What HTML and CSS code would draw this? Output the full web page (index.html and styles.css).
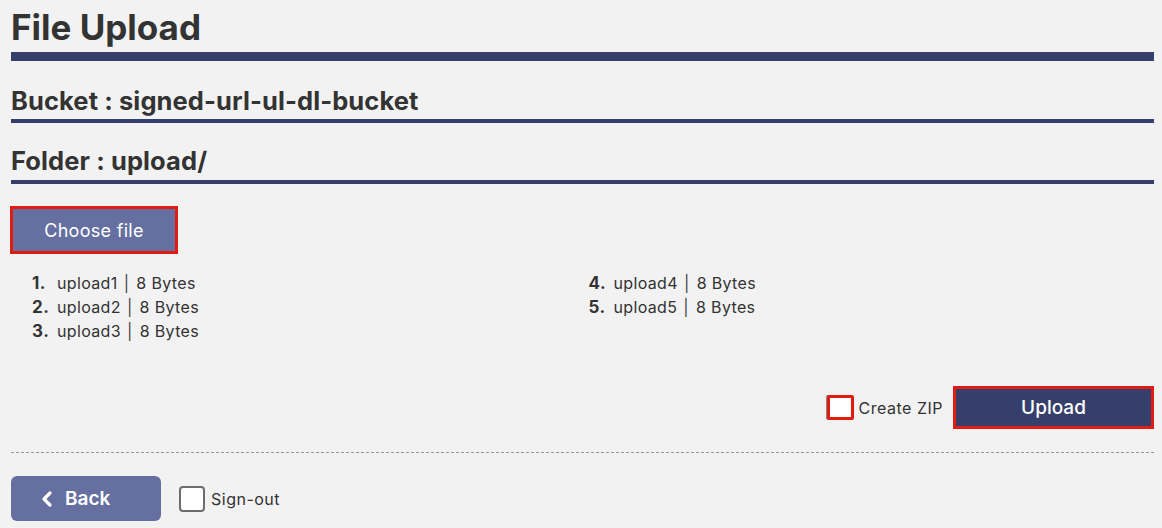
FILE: index.html
```html
<!DOCTYPE html>
<html lang="en">
<head>
<meta charset="utf-8">
<title>File Upload</title>
<link rel="stylesheet" href="styles.css">
</head>
<body>
<div class="page">
  <h1 class="title">File Upload</h1>
  <h2 class="sub sub-bucket">Bucket : signed-url-ul-dl-bucket</h2>
  <h2 class="sub sub-folder">Folder : upload/</h2>

  <div class="choose-wrap">
    <button class="btn-choose" type="button">Choose file</button>
  </div>

  <ol class="files">
    <li>upload1<span class="pipe">|</span>8 Bytes</li>
    <li>upload2<span class="pipe">|</span>8 Bytes</li>
    <li>upload3<span class="pipe">|</span>8 Bytes</li>
    <li>upload4<span class="pipe">|</span>8 Bytes</li>
    <li>upload5<span class="pipe">|</span>8 Bytes</li>
  </ol>

  <div class="actions">
    <label class="zip"><span class="box box-red"></span><span>Create ZIP</span></label>
    <button class="btn-upload" type="button">Upload</button>
  </div>

  <hr class="sep">

  <div class="footer">
    <button class="btn-back" type="button">
      <svg class="chev" width="12" height="18" viewBox="0 0 12 18"><polyline points="9,3 3,9 9,15" fill="none" stroke="#fff" stroke-width="3.2" stroke-linecap="round" stroke-linejoin="round"/></svg>
      <span>Back</span>
    </button>
    <label class="signout"><span class="box box-gray"></span><span>Sign-out</span></label>
  </div>
</div>
</body>
</html>
```

FILE: styles.css
```css
* { box-sizing: border-box; }
html, body { margin: 0; padding: 0; }
body {
  background: #f2f2f2;
  color: #333;
  font-family: Inter, "Noto Sans", "Liberation Sans", sans-serif;
  width: 1162px;
  height: 528px;
  overflow: hidden;
}
.page {
  padding: 0 8px 0 11px;
}
.title {
  margin: 0;
  padding-top: 7px;
  font-size: 35px;
  line-height: 40px;
  height: 61px;
  font-weight: 700;
  color: #333;
  border-bottom: 9px solid #363f6b;
}
.sub {
  margin: 0;
  font-size: 25.5px;
  font-weight: 700;
  letter-spacing: 0.1px;
  color: #333;
  line-height: 30px;
  border-bottom: 4px solid #363f6b;
}
.sub-bucket { padding-top: 25px; height: 62px; }
.sub-folder { padding-top: 23px; height: 61px; }
.choose-wrap {
  padding-top: 22px;
}
.btn-choose {
  margin-left: -1px;
  width: 168px;
  height: 48px;
  background: #6570a0;
  border: 3px solid #e21c10;
  color: #fff;
  font-family: inherit;
  font-size: 18px;
  letter-spacing: 0.3px;
  padding: 0;
  display: block;
}
.files {
  margin: 17px 0 0 0;
  padding: 0 0 0 46px;
  list-style: none;
  counter-reset: item;
  column-count: 2;
  column-gap: 16px;
  font-size: 16px;
  line-height: 24px;
  letter-spacing: 0.35px;
  color: #333;
  height: 72px;
}
.files li { counter-increment: item; }
.files li::before {
  content: counter(item) ".";
  display: inline-block;
  width: 25px;
  margin-left: -25px;
  font-weight: 700;
  font-size: 17px;
  letter-spacing: 0.5px;
}
.pipe {
  display: inline-block;
  margin: 0 7px 0 6px;
  color: #444;
}
.actions {
  margin-top: 43px;
  display: flex;
  justify-content: flex-end;
  align-items: center;
  gap: 10px;
}
.zip, .signout {
  display: flex;
  align-items: center;
  gap: 6px;
  font-size: 16px;
  letter-spacing: 0.5px;
  color: #333;
}
.zip { gap: 5px; }
.box {
  display: inline-block;
  width: 26px;
  height: 26px;
  background: #fff;
  border-radius: 4px;
}
.box-red {
  border: 3px solid #e21c10;
  width: 27px;
  height: 25px;
  border-radius: 2px;
  box-shadow: -1px 0 0 #8a8a8a;
}
.box-gray { border: 2px solid #6d6d6d; }
.btn-upload {
  width: 201px;
  height: 43px;
  background: #363f6b;
  border: 3px solid #e21c10;
  color: #fff;
  font-family: inherit;
  font-size: 19px;
  font-weight: 500;
  padding: 0;
}
.sep {
  margin: 23px 0 0 0;
  border: 0;
  border-top: 1px dashed #9a9a9a;
  height: 0;
}
.footer {
  margin-top: 23px;
  display: flex;
  align-items: center;
  gap: 18px;
}
.btn-back {
  width: 150px;
  height: 45px;
  background: #6570a0;
  border: 0;
  border-radius: 6px;
  color: #fff;
  font-family: inherit;
  font-size: 19px;
  font-weight: 600;
  display: flex;
  align-items: center;
  padding: 0 0 0 30px;
  gap: 12px;
}
.chev { display: block; }
```
